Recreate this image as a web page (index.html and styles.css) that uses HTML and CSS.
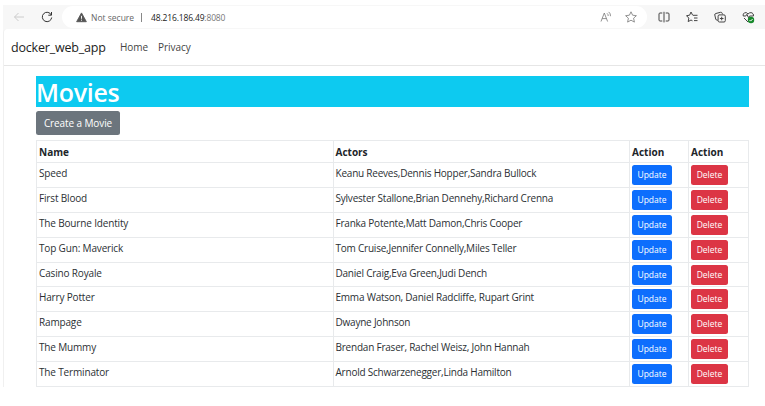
FILE: index.html
```html
<!DOCTYPE html>
<html lang="en">
<head>
<meta charset="utf-8">
<title>Movies - docker_web_app</title>
<link rel="stylesheet" href="styles.css">
</head>
<body>
<div class="window">
  <header class="toolbar">
    <svg class="back" viewBox="0 0 12 12"><path d="M11 6H1.5M5.500 2 1.500 6l4 4"/></svg>
    <svg class="reload" viewBox="0 0 12 12"><path d="M10.300 4A4.700 4.700 0 1 0 10.700 6.500M10.500 1v3.200H7.300"/></svg>
    <div class="address">
      <svg class="warning" viewBox="0 0 12 12"><path d="M6 1 11.300 10.600H.7Z" fill="#555" stroke="#555" stroke-linejoin="round"/><path d="M6 4.200v3.200M6 8.400v1.100" stroke="#fff"/></svg>
      <span class="insecure">Not secure</span>
      <span class="divider"></span>
      <span class="url">48.216.186.49<span class="port">:8080</span></span>
      <svg class="read" viewBox="0 0 12 12"><path d="M1 10.500 4.300 2l3.300 8.500M2.200 7.600h4.200M7 2.300q1.300 1 1.200 2.700M8.700.9q2 1.600 1.800 4.300"/></svg>
      <svg class="star" viewBox="0 0 12 12"><path d="m6 .8 1.600 3.400 3.800.5-2.800 2.500.8 3.900L6 9.200l-3.400 1.900.8-3.900L.6 4.700l3.800-.5Z"/></svg>
    </div>
    <div class="tools">
      <svg viewBox="0 0 12 12"><path d="M4.300 2H2Q1 2 1 3v6q0 1 1 1h2.300M7.700 2H10q1 0 1 1v6q0 1-1 1H7.700M6 .8v10.600"/></svg>
      <svg viewBox="0 0 12 12"><path d="M7 4.300h4.500M8 7h3.500M8 9.600h3.500M6.700 4.300 5 1 3.600 4.200.5 4.700l2.300 2.400-.6 3.500L5 9l1.500.8"/></svg>
      <svg viewBox="0 0 12 12"><path d="M4 9.200H3.300Q2 9.200 1.700 8L.8 4Q.5 2.800 1.800 2.500L6.500 1.300Q7.800 1 8.200 2.300L8.500 3.300M5.200 3.900h4.800q1.300 0 1.300 1.300v4.500q0 1.300-1.300 1.300H5.400q-1.300 0-1.300-1.300V5.200q0-1.300 1.300-1.300M7.700 5.700v3.600M5.900 7.500h3.600"/></svg>
      <svg class="health" viewBox="0 0 13 13"><path d="M6 3Q4.500.9 2.500 1.800.7 2.800 1.200 5h2.600l1.100-1.700 1.600 3.400L7.600 5h3.900Q11.700 2.600 10 1.800 7.700 1 6 3M2 7l4 4"/><circle cx="9" cy="9" r="3.200" fill="#16882a" stroke="none"/><path d="m7.500 9 1.100 1.100 2-2.100" stroke="#fff"/></svg>
    </div>
  </header>
  <div class="page">
    <nav class="navbar">
      <span class="brand">docker_web_app</span>
      <span class="link">Home</span>
      <span class="link">Privacy</span>
    </nav>
    <main>
      <h1>Movies</h1>
      <button class="btn create">Create a Movie</button>
      <table>
        <colgroup><col class="name"><col class="actors"><col class="update-col"><col></colgroup>
        <thead><tr><th>Name</th><th>Actors</th><th>Action</th><th>Action</th></tr></thead>
        <tbody>
          <tr><td>Speed</td><td>Keanu Reeves,Dennis Hopper,Sandra Bullock</td><td><button class="btn update">Update</button></td><td><button class="btn delete">Delete</button></td></tr>
          <tr><td>First Blood</td><td>Sylvester Stallone,Brian Dennehy,Richard Crenna</td><td><button class="btn update">Update</button></td><td><button class="btn delete">Delete</button></td></tr>
          <tr><td>The Bourne Identity</td><td>Franka Potente,Matt Damon,Chris Cooper</td><td><button class="btn update">Update</button></td><td><button class="btn delete">Delete</button></td></tr>
          <tr><td>Top Gun: Maverick</td><td>Tom Cruise,Jennifer Connelly,Miles Teller</td><td><button class="btn update">Update</button></td><td><button class="btn delete">Delete</button></td></tr>
          <tr><td>Casino Royale</td><td>Daniel Craig,Eva Green,Judi Dench</td><td><button class="btn update">Update</button></td><td><button class="btn delete">Delete</button></td></tr>
          <tr><td>Harry Potter</td><td>Emma Watson, Daniel Radcliffe, Rupart Grint</td><td><button class="btn update">Update</button></td><td><button class="btn delete">Delete</button></td></tr>
          <tr><td>Rampage</td><td>Dwayne Johnson</td><td><button class="btn update">Update</button></td><td><button class="btn delete">Delete</button></td></tr>
          <tr><td>The Mummy</td><td>Brendan Fraser, Rachel Weisz, John Hannah</td><td><button class="btn update">Update</button></td><td><button class="btn delete">Delete</button></td></tr>
          <tr><td>The Terminator</td><td>Arnold Schwarzenegger,Linda Hamilton</td><td><button class="btn update">Update</button></td><td><button class="btn delete">Delete</button></td></tr>
        </tbody>
      </table>
    </main>
  </div>
</div>
</body>
</html>
```
FILE: styles.css
```css
* { box-sizing: border-box; }
body {
  margin: 0;
  height: 406px;
  overflow: hidden;
  background: #fff;
  color: #2b2f33;
  font: 10px/15px "Open Sans", "Noto Sans", sans-serif;
}
svg { display: block; flex: none; width: 12px; height: 12px; fill: none; stroke: #444; stroke-width: 1; }
.window { margin: 5px 0 0 3px; height: 382px; background: #f7f7f7; overflow: hidden; }
.toolbar { display: flex; align-items: center; height: 24px; }
.back { margin-left: 10px; stroke: #ccc; }
.reload { margin-left: 16px; stroke: #333; }
.address {
  display: flex;
  align-items: center;
  width: 585px;
  height: 22px;
  margin-left: 9px;
  padding-left: 14px;
  border-radius: 11px;
  background: #fff;
}
.warning { width: 11px; height: 11px; }
.insecure { width: 43px; margin-left: 4px; color: #666; font-size: 8.5px; white-space: nowrap; }
.divider { width: 1px; height: 9px; margin-left: 7px; background: #888; }
.url { margin-left: 9px; color: #222; font-size: 8.5px; letter-spacing: -.15px; }
.port { color: #777; }
.read { margin-left: auto; stroke: #777; stroke-width: .8; }
.star { margin: 0 10px 0 13px; stroke: #777; stroke-width: .8; }
.tools { display: flex; gap: 16px; margin-left: 11px; }
.tools .health { width: 13px; height: 13px; }
.page { height: 358px; border-left: 1px solid #f0f0f0; border-radius: 4px 0 0; background: #fff; }
.navbar { display: flex; align-items: center; height: 37px; padding: 1px 0 0 7px; border-bottom: 1px solid #e6e6e6; }
.brand { width: 109px; color: #222; font-size: 12.5px; letter-spacing: -.2px; }
.link { width: 38px; color: #444; letter-spacing: -.05px; }
main { width: 713px; margin: 10px 0 0 32px; }
h1 { height: 31px; margin: 0 0 4px; background: #0dcaf0; color: #fff; font-size: 25px; line-height: 33px; font-weight: 600; letter-spacing: -.3px; }
.btn { display: block; padding: 0; border: 0; border-radius: 2.5px; color: #fff; font-family: inherit; }
.create { width: 84px; height: 24px; background: #6c757d; font-size: 10px; line-height: 25px; letter-spacing: -.1px; }
table { width: 713px; margin-top: 5px; border-collapse: collapse; table-layout: fixed; }
.name, .actors { width: 296.5px; }
.update-col { width: 59px; }
th, td { padding: 0 0 0 2px; border: 1px solid #e8eaec; text-align: left; vertical-align: top; white-space: nowrap; }
th { height: 22px; padding-top: 4px; color: #212529; font-weight: 700; }
td { height: 24.9px; padding-top: 3px; letter-spacing: -.16px; }
td:nth-child(2) { letter-spacing: -.22px; }
td .btn { margin-top: -1px; height: 20px; font-size: 8.5px; line-height: 20px; }
.update { width: 40px; background: #0d6efd; }
.delete { width: 37px; background: #dc3545; }
```
